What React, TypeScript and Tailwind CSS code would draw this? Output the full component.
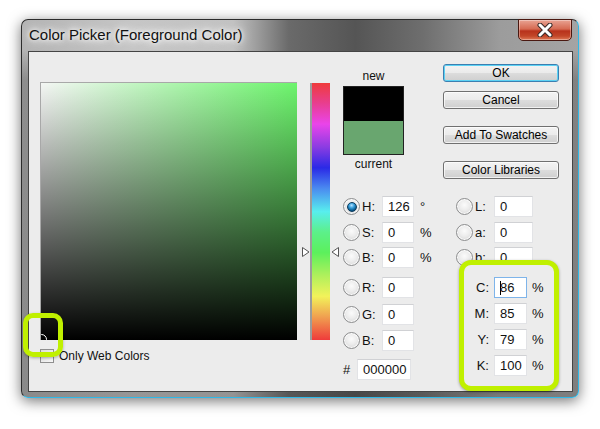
import React from 'react';

// ラジオボタン
const Radio = ({ checked }: { checked?: boolean }) => (
  <div className="w-[17px] h-[17px] shrink-0 rounded-full border border-[#8d8e8f] bg-[radial-gradient(circle_at_50%_40%,#fbfbfb_0%,#ececec_45%,#cfcfcf_100%)] flex items-center justify-center shadow-[inset_0_0_0_1px_rgba(255,255,255,0.8)]">
    {checked && (
      <div className="w-[10px] h-[10px] rounded-full border border-[#0b3a5c] bg-[radial-gradient(circle_at_45%_30%,#b8e4ff_0%,#3aa0dc_35%,#0a5a8e_70%,#06304e_100%)]" />
    )}
  </div>
);

const Field = ({ value, w, focus }: { value: string; w: string; focus?: boolean }) => (
  <div
    className={`${w} h-[21px] shrink-0 bg-white border ${
      focus ? 'border-[#7eb4ea]' : 'border-[#e2e3e6] border-t-[#d0d1d4]'
    } flex items-center pl-[5px] text-[13px] text-[#111]`}
  >
    {focus && <span className="w-px h-[14px] bg-black -mr-px" />}
    {value}
  </div>
);

const Button = ({ label, primary }: { label: string; primary?: boolean }) => (
  <div
    className={`h-[18px] w-full rounded-[3px] border flex items-center justify-center text-[12px] text-black bg-[linear-gradient(#f3f3f3,#ebebeb_48%,#dcdcdc_52%,#cfcfcf)] ${
      primary
        ? 'border-[#3c7fb1] shadow-[inset_0_0_0_1px_#5cd2f4]'
        : 'border-[#707070] shadow-[inset_0_0_0_1px_rgba(255,255,255,0.7)]'
    }`}
  >
    {label}
  </div>
);

const hsbRows = [
  { label: 'H:', value: '126', unit: '°', checked: true, mt: 'mt-[24px]' },
  { label: 'S:', value: '0', unit: '%', mt: 'mt-[5px]' },
  { label: 'B:', value: '0', unit: '%', mt: 'mt-[4px]' },
  { label: 'R:', value: '0', unit: '', mt: 'mt-[9px]' },
  { label: 'G:', value: '0', unit: '', mt: 'mt-[6px]' },
  { label: 'B:', value: '0', unit: '', mt: 'mt-[5px]' },
];

const labRows = [
  { label: 'L:', value: '0', mt: 'mt-[17px]' },
  { label: 'a:', value: '0', mt: 'mt-[5px]' },
  { label: 'b:', value: '0', mt: 'mt-[4px]' },
];

const cmykRows = [
  { label: 'C:', value: '86', focus: true },
  { label: 'M:', value: '85' },
  { label: 'Y:', value: '79' },
  { label: 'K:', value: '100' },
];

export default function App() {
  return (
    <div className="w-[600px] h-[429px] bg-white overflow-hidden pt-[19px] pl-[21px] font-['Liberation_Sans',Arial,sans-serif]">
      {/* ウィンドウ */}
      <div className="relative w-[558px] h-[379px] rounded-[7px] border border-[#2c2c2c] border-r-[#2fb8e6] border-b-[#2fb8e6] shadow-[0_3px_14px_rgba(0,0,0,0.55)] bg-[image:linear-gradient(to_bottom,rgba(0,0,0,0)_0px,rgba(0,0,0,0)_30px,rgba(40,40,40,0.28)_60px,rgba(40,40,40,0.3)_100%),linear-gradient(to_right,#b4b4b4_0%,#c6c6c6_20%,#c2c2c2_38%,#6a6a6a_48%,#555555_60%,#6e6e6e_72%,#9c9c9c_86%,#a4a4a4_100%)] flex flex-col pl-[6px] pr-[5px] pb-[5px]">
        {/* タイトル */}
        <div className="h-[31px] flex items-center pl-[1px]">
          <span className="text-[15px] text-[#111] [text-shadow:0_0_8px_#fff,0_0_12px_#fff,0_0_4px_#fff]">
            Color Picker (Foreground Color)
          </span>
        </div>

        {/* 閉じるボタン */}
        <div className="absolute -top-px left-[496px] w-[54px] h-[22px] rounded-b-[5px] border border-[#4a1810] bg-[linear-gradient(#e9a393_0%,#d66a52_45%,#b8321c_55%,#c24628_80%,#e07a58_100%)] flex items-center justify-center shadow-[inset_0_0_0_1px_rgba(255,255,255,0.35)]">
          <svg width="16" height="14" viewBox="0 0 16 14">
            <path d="M3 2 L13 12 M13 2 L3 12" stroke="#3a2a28" strokeWidth="5" strokeLinecap="round" />
            <path d="M3 2 L13 12 M13 2 L3 12" stroke="#ffffff" strokeWidth="3" strokeLinecap="round" />
          </svg>
        </div>

        {/* クライアント領域 */}
        <div className="flex-1 border border-[#444] bg-[#ececec] flex items-start">
          {/* カラーフィールド */}
          <div className="ml-[11px] mt-[30px] flex flex-col">
            <div className="relative w-[257px] h-[258px] overflow-hidden border-t border-l border-[#a8a8a8] bg-[image:linear-gradient(to_top,#000_0%,rgba(0,0,0,0)_100%),linear-gradient(to_right,#f4f6f4_0%,#6cf46c_100%)]">
              <div className="absolute -left-[5px] -bottom-[5px] w-[11px] h-[11px] rounded-full border border-white" />
            </div>
            <div className="mt-[9px] h-[14px] flex items-center gap-[5px]">
              <div className="w-[14px] h-[14px] border border-[#8f8f8f] bg-[linear-gradient(135deg,#dcdcdc,#f8f8f8)]" />
              <span className="text-[12px] text-[#111]">Only Web Colors</span>
            </div>
          </div>

          {/* 色相スライダー */}
          <div className="relative ml-[13px] mt-[31px] w-[20px] h-[257px] border-l-2 border-[#9c9c9c] bg-[linear-gradient(#ef3b3b_0%,#e83e90_8%,#ea44ea_16%,#8a3ce2_25%,#2a2ae6_33%,#4a8af0_41%,#58eeee_50%,#5cf08a_58%,#5cf05c_66%,#b0f05c_75%,#f2f25a_83%,#f0a050_91%,#ef3b3b_100%)]">
            <svg className="absolute -left-[10px] top-[164px]" width="8" height="10" viewBox="0 0 8 10">
              <path d="M0.5 0.5 L7 5 L0.5 9.5 Z" fill="#fff" stroke="#555" strokeWidth="1" />
            </svg>
            <svg className="absolute -right-[9px] top-[164px]" width="8" height="10" viewBox="0 0 8 10">
              <path d="M7.5 0.5 L1 5 L7.5 9.5 Z" fill="#fff" stroke="#555" strokeWidth="1" />
            </svg>
          </div>

          {/* HSB / RGB */}
          <div className="ml-[13px] mt-[16px] w-[100px] flex flex-col text-[#111]">
            <div className="w-[61px] h-[16px] leading-[16px] text-center text-[12px]">new</div>
            <div className="mt-[2px] w-[61px] h-[69px] border border-[#222] flex flex-col">
              <div className="flex-1 bg-black" />
              <div className="h-[33px] bg-[#69a66f]" />
            </div>
            <div className="mt-[1px] w-[61px] h-[16px] leading-[16px] text-center text-[12px]">current</div>
            {hsbRows.map((r, i) => (
              <div key={i} className={`${r.mt} h-[21px] flex items-center`}>
                <Radio checked={r.checked} />
                <span className="ml-[2px] w-[20px] text-[13px]">{r.label}</span>
                <Field value={r.value} w="w-[32px]" />
                <span className="ml-[6px] text-[13px]">{r.unit}</span>
              </div>
            ))}
            <div className="mt-[8px] h-[21px] flex items-center">
              <span className="w-[14px] text-[13px]">#</span>
              <Field value="000000" w="w-[54px]" />
            </div>
          </div>

          {/* ボタン / Lab / CMYK */}
          <div className="mt-[12px] w-[116px] flex flex-col text-[#111]">
            <Button label="OK" primary />
            <div className="mt-[9px]"><Button label="Cancel" /></div>
            <div className="mt-[17px]"><Button label="Add To Swatches" /></div>
            <div className="mt-[17px]"><Button label="Color Libraries" /></div>
            {labRows.map((r) => (
              <div key={r.label} className={`${r.mt} pl-[13px] h-[21px] flex items-center`}>
                <Radio />
                <span className="ml-[2px] w-[19px] text-[13px]">{r.label}</span>
                <Field value={r.value} w="w-[39px]" />
              </div>
            ))}
            {/* ハイライト枠 */}
            <div className="relative z-10 ml-[16px] -mt-[8px] w-[100px] h-[131px] rounded-[12px] border-[5px] border-[#c0f000] bg-[#ececec] shadow-[0_1px_3px_rgba(0,0,0,0.35)] pt-[12px] flex flex-col gap-[5px]">
              {cmykRows.map((r) => (
                <div key={r.label} className="h-[21px] flex items-center">
                  <span className="w-[25px] text-right text-[13px]">{r.label}</span>
                  <div className="ml-[5px]">
                    <Field value={r.value} w="w-[33px]" focus={r.focus} />
                  </div>
                  <span className="ml-[5px] text-[13px]">%</span>
                </div>
              ))}
            </div>
          </div>
        </div>

        {/* 左下のハイライト */}
        <div className="absolute left-[1px] top-[293px] w-[40px] h-[44px] rounded-[10px] border-[5px] border-[#c0f000] shadow-[0_1px_3px_rgba(0,0,0,0.3)]" />
      </div>
    </div>
  );
}
